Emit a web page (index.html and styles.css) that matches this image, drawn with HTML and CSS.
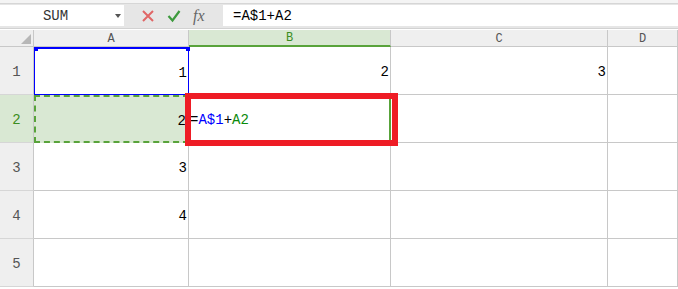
FILE: index.html
```html
<!doctype html>
<html>

<head>
    <title>Sheet</title>
    <link rel="stylesheet" href="styles.css">
</head>

<body>
    <div class="topStrip"></div>

    <!-- Formula bar -->
    <div class="formulaBar">
        <div class="nameBox">
            <span class="nameText">SUM</span>
            <span class="dropArrow"></span>
        </div>
        <div class="tools">
            <svg class="tool" width="14" height="14" viewBox="0 0 14 14">
                <path d="M2 2 L12 12 M12 2 L2 12" stroke="#e06666" stroke-width="2" fill="none" />
            </svg>
            <svg class="tool" width="14" height="14" viewBox="0 0 14 14">
                <path d="M1.5 7 L5.5 11.5 L12.5 2" stroke="#3d9a3d" stroke-width="2.2" fill="none" />
            </svg>
            <span class="fx">fx</span>
        </div>
        <div class="formulaInput">=A$1+A2</div>
    </div>

    <!-- Grid -->
    <div class="sheet">
        <div class="corner"><span class="cornerMark"></span></div>
        <div class="colHead">A</div>
        <div class="colHead active">B</div>
        <div class="colHead">C</div>
        <div class="colHead">D</div>

        <div class="rowHead">1</div>
        <div class="cell num refBlue">1</div>
        <div class="cell num">2</div>
        <div class="cell num">3</div>
        <div class="cell"></div>

        <div class="rowHead active">2</div>
        <div class="cell num refGreen">2</div>
        <div class="cell editing"><span>=</span><span class="blue">A$1</span><span>+</span><span class="green">A2</span></div>
        <div class="cell"></div>
        <div class="cell"></div>

        <div class="rowHead">3</div>
        <div class="cell num">3</div>
        <div class="cell"></div>
        <div class="cell"></div>
        <div class="cell"></div>

        <div class="rowHead">4</div>
        <div class="cell num">4</div>
        <div class="cell"></div>
        <div class="cell"></div>
        <div class="cell"></div>

        <div class="rowHead">5</div>
        <div class="cell"></div>
        <div class="cell"></div>
        <div class="cell"></div>
        <div class="cell"></div>

        <!-- red annotation box -->
        <div class="mark"></div>
    </div>
</body>
</html>
```

FILE: styles.css
```css
* {
    box-sizing: border-box;
}

body {
    margin: 0;
    width: 678px;
    height: 289px;
    overflow: hidden;
    background: #ffffff;
    font-family: "Liberation Mono", "DejaVu Sans Mono", monospace;
    font-size: 14px;
    color: #000;
}

/* Top strip above the formula bar */
.topStrip {
    height: 4px;
    background: #f4f4f4;
    border-bottom: 1px solid #d6d6d6;
}

/* Formula bar */
.formulaBar {
    display: flex;
    align-items: stretch;
    height: 25px;
    background: #e6e6e6;
    padding: 1px 0 2px 0;
    border-bottom: 1px solid #d2d2d2;
}

.nameBox {
    width: 124px;
    background: #fff;
    display: flex;
    align-items: center;
    position: relative;
}

.nameText {
    flex: 1;
    text-align: center;
    color: #333;
    padding-right: 4px;
}

.dropArrow {
    width: 0;
    height: 0;
    border-left: 3px solid transparent;
    border-right: 3px solid transparent;
    border-top: 4px solid #555;
    margin-right: 3px;
}

.tools {
    width: 99px;
    display: flex;
    align-items: center;
    gap: 12px;
    padding-left: 17px;
}

.fx {
    font-family: "Liberation Serif", serif;
    font-style: italic;
    font-size: 16px;
    color: #666;
    margin-left: 0px;
}

.formulaInput {
    flex: 1;
    background: #fff;
    display: flex;
    align-items: center;
    padding-left: 10px;
    color: #000;
}

/* Sheet grid */
.sheet {
    position: relative;
    display: grid;
    grid-template-columns: 34px 155px 202px 217px 1fr;
    grid-template-rows: 17px repeat(5, 48px);
    margin-top: 1px;
}

.corner {
    background: #efefef;
    border-right: 1px solid #c8c8c8;
    border-bottom: 1px solid #c8c8c8;
    display: flex;
    justify-content: flex-end;
    align-items: flex-end;
    padding: 0 2px 2px 0;
}

.cornerMark {
    width: 0;
    height: 0;
    border-left: 10px solid transparent;
    border-bottom: 10px solid #b7b7b7;
}

.colHead {
    background: #efefef;
    border-right: 1px solid #c8c8c8;
    border-bottom: 1px solid #c8c8c8;
    color: #555;
    font-size: 12px;
    display: flex;
    align-items: center;
    justify-content: center;
    padding-top: 1px;
}

.colHead.active {
    background: #d9e8d3;
    color: #3b8d21;
    border-bottom: 2px solid #58a33a;
}

.rowHead {
    background: #efefef;
    border-right: 1px solid #c8c8c8;
    border-bottom: 1px solid #d6d6d6;
    color: #555;
    display: flex;
    align-items: center;
    justify-content: center;
    padding-top: 2px;
}

.rowHead.active {
    background: #d9e8d3;
    color: #3b8d21;
}

.cell {
    position: relative;
    border-right: 1px solid #c8c8c8;
    border-bottom: 1px solid #c8c8c8;
    display: flex;
    align-items: center;
    padding: 3px 1px 0 1px;
}

.cell.num {
    justify-content: flex-end;
}

/* Referenced cell A1 (blue frame) */
.refBlue {
    border: 1px solid #0000ff;
    border-top: 2px solid #0000ff;
}

.refBlue::before,
.refBlue::after {
    content: "";
    position: absolute;
    width: 4px;
    height: 4px;
    background: #0000ff;
    top: -2px;
}

.refBlue::before {
    left: -1px;
}

.refBlue::after {
    right: -2px;
}

/* Referenced cell A2 (green dashed frame) */
.refGreen {
    background: #d9e8d3;
    border: 2px dashed #58a33a;
    border-right-color: transparent;
}

/* Cell being edited (B2) */
.editing {
    border-right: 2px solid #58a33a;
    border-bottom: 2px solid #58a33a;
    padding-left: 1px;
}

.blue {
    color: #0000ff;
}

.green {
    color: #0a8a0a;
}

/* Red annotation around B2 */
.mark {
    position: absolute;
    left: 185px;
    top: 63px;
    width: 213px;
    height: 53px;
    border: 6px solid #ee1c25;
}
```
